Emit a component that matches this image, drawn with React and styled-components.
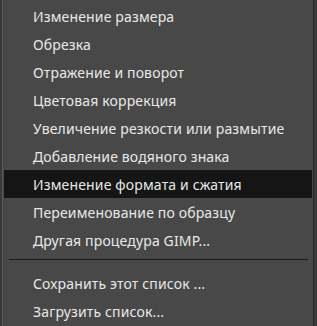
import styled, { createGlobalStyle } from "styled-components";

const GlobalStyle = createGlobalStyle`
  html, body {
    margin: 0;
    padding: 0;
    background: #3b3b3b;
    overflow: hidden;
  }
`;

const items = [
  "Изменение размера",
  "Обрезка",
  "Отражение и поворот",
  "Цветовая коррекция",
  "Увеличение резкости или размытие",
  "Добавление водяного знака",
  "Изменение формата и сжатия",
  "Переименование по образцу",
  "Другая процедура GIMP...",
];

const extra = ["Сохранить этот список ...", "Загрузить список..."];

const Screen = styled.div`
  width: 317px;
  height: 326px;
  display: flex;
  background: #3c3c3c;
  overflow: hidden;
`;

const Edge = styled.div`
  width: ${(p) => p.$w}px;
  flex-shrink: 0;
  background: #3a3a3a;
  border-${(p) => p.$side}: 1px solid ${(p) => p.$line};
`;

const Menu = styled.ul`
  list-style: none;
  margin: 0;
  padding: 2px 0 0 0;
  width: 310px;
  flex-shrink: 0;
  background: #484848;
  font-family: "Noto Sans", "Open Sans", sans-serif;
  font-size: 14px;
  letter-spacing: 0.15px;
  color: #e8e8e8;
`;

const Item = styled.li`
  height: 28px;
  display: flex;
  align-items: center;
  padding-left: 29px;
  margin: 0 1px;
  background: ${(p) => (p.$active ? "#151515" : "transparent")};
  white-space: nowrap;
`;

const Separator = styled.li`
  height: 1px;
  margin: 5px 5px 9px 6px;
  background: #1b1b1b;
`;

export default function App() {
  return (
    <>
      <GlobalStyle />
      <Screen>
        <Edge $w={2} $side="right" $line="#555" />
        <Menu>
          {items.map((t, i) => (
            <Item key={t} $active={i === 6}>
              {t}
            </Item>
          ))}
          <Separator />
          {extra.map((t) => (
            <Item key={t}>{t}</Item>
          ))}
        </Menu>
        <Edge $w={5} $side="left" $line="#2a2a2a" />
      </Screen>
    </>
  );
}
